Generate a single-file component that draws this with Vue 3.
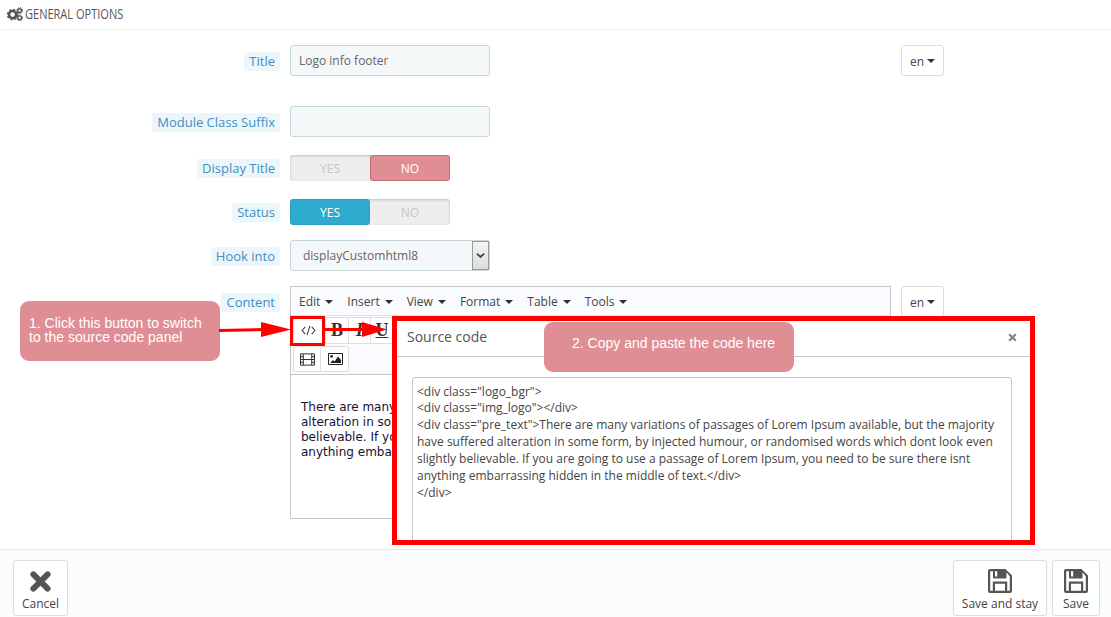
<script setup>
const menus = ['Edit', 'Insert', 'View', 'Format', 'Table', 'Tools']
const sourceLines = [
  '<div class="logo_bgr">',
  '<div class="img_logo"></div>',
  '<div class="pre_text">There are many variations of passages of Lorem Ipsum available, but the majority',
  'have suffered alteration in some form, by injected humour, or randomised words which dont look even',
  'slightly believable. If you are going to use a passage of Lorem Ipsum, you need to be sure there isnt',
  'anything embarrassing hidden in the middle of text.</div>',
  '</div>'
]
const editorLines = ['There are many', 'alteration in som', 'believable. If yo', 'anything embar']
</script>

<template>
  <div class="page">
    <header class="head">
      <svg class="cogs" viewBox="0 0 16 14" width="16" height="14">
        <circle cx="5.6" cy="7.6" r="3.6" fill="none" stroke="#555" stroke-width="2.6" />
        <circle cx="5.6" cy="7.6" r="5" fill="none" stroke="#555" stroke-width="1.6" stroke-dasharray="2 1.93" />
        <circle cx="12.6" cy="3.6" r="1.9" fill="none" stroke="#555" stroke-width="1.4" />
        <circle cx="12.6" cy="3.6" r="2.9" fill="none" stroke="#555" stroke-width="1" stroke-dasharray="1.2 1.08" />
        <circle cx="12.6" cy="10.8" r="1.9" fill="none" stroke="#555" stroke-width="1.4" />
        <circle cx="12.6" cy="10.8" r="2.9" fill="none" stroke="#555" stroke-width="1" stroke-dasharray="1.2 1.08" />
      </svg>
      <span class="head-text">GENERAL OPTIONS</span>
    </header>

    <main class="form">
      <div class="row r-title">
        <div class="lab"><span>Title</span></div>
        <div class="input">Logo info footer</div>
        <button class="lang">en<i class="caret"></i></button>
      </div>
      <div class="row r-suffix">
        <div class="lab"><span>Module Class Suffix</span></div>
        <div class="input"></div>
      </div>
      <div class="row r-toggle">
        <div class="lab"><span>Display Title</span></div>
        <div class="toggle">
          <span class="tg off">YES</span>
          <span class="tg no">NO</span>
        </div>
      </div>
      <div class="row r-toggle r-status">
        <div class="lab"><span>Status</span></div>
        <div class="toggle">
          <span class="tg yes">YES</span>
          <span class="tg off">NO</span>
        </div>
      </div>
      <div class="row r-select">
        <div class="lab"><span>Hook into</span></div>
        <div class="input select">
          <span>displayCustomhtml8</span>
          <span class="sel-btn">
            <svg viewBox="0 0 10 7" width="9" height="7"><path d="M1 1.5l4 3.6 4-3.6" fill="none" stroke="#444" stroke-width="2" /></svg>
          </span>
        </div>
      </div>
      <div class="row r-editor">
        <div class="lab lab-editor"><span>Content</span></div>
        <div class="editor">
          <div class="menubar">
            <span v-for="m in menus" :key="m" class="menu">{{ m }}<i class="caret small"></i></span>
          </div>
          <div class="tools">
            <div class="tool-row first">
              <span class="tb code">
                <svg viewBox="0 0 16 12" width="15" height="11"><path d="M4.5 2L1 6l3.5 4M11.5 2L15 6l-3.5 4M9.5 1L6.5 11" fill="none" stroke="#333" stroke-width="1.1" /></svg>
              </span>
              <span class="tb serif b">B</span>
              <span class="tb serif i">I</span>
              <span class="tb serif u">U</span>
            </div>
            <div class="tool-row second">
              <span class="tb media">
                <svg viewBox="0 0 16 13" width="15" height="13">
                  <path d="M.5.5h15v12H.5zM3.5.5v12M12.5.5v12M3.5 6.5h9M.5 3.5h3M.5 6.5h3M.5 9.5h3M12.5 3.5h3M12.5 6.5h3M12.5 9.5h3" fill="none" stroke="#222" stroke-width="1" />
                </svg>
              </span>
              <span class="tb media">
                <svg viewBox="0 0 15 12" width="15" height="12">
                  <path d="M.5.5h14v11H.5z" fill="none" stroke="#222" />
                  <circle cx="3.6" cy="3.4" r="1.4" fill="#222" />
                  <path d="M2 10l3-3 1.6 1.4L10 3.5l3 3.5v3z" fill="#222" />
                </svg>
              </span>
            </div>
          </div>
          <div class="content">
            <div v-for="l in editorLines" :key="l">{{ l }}</div>
          </div>
        </div>
        <button class="lang">en<i class="caret"></i></button>
      </div>
    </main>

    <footer class="foot">
      <button class="fbtn cancel">
        <svg viewBox="0 0 20 20" width="21" height="21"><path d="M3.2 3.2L16.8 16.8M16.8 3.2L3.2 16.8" stroke="#555" stroke-width="5.6" stroke-linecap="round" /></svg>
        <span>Cancel</span>
      </button>
      <div class="foot-right">
        <button class="fbtn stay">
          <svg viewBox="0 0 24 24" width="24" height="24"><path fill-rule="evenodd" fill="#555" d="M0 2a2 2 0 0 1 2-2h15.5L24 6.500V22a2 2 0 0 1-2 2H2a2 2 0 0 1-2-2zM2.200 2.200v19.600h2.600V12.500h14.400v9.300h2.600V7.400L18.500 3.300v5.200a1 1 0 0 1-1 1H6a1 1 0 0 1-1-1V2.200zM7 2.200V7.500h2.200V2.200zM7 14.700v7.100h10v-7.100z" /></svg>
          <span>Save and stay</span>
        </button>
        <button class="fbtn save">
          <svg viewBox="0 0 24 24" width="24" height="24"><path fill-rule="evenodd" fill="#555" d="M0 2a2 2 0 0 1 2-2h15.5L24 6.500V22a2 2 0 0 1-2 2H2a2 2 0 0 1-2-2zM2.200 2.200v19.600h2.600V12.500h14.400v9.300h2.600V7.400L18.500 3.300v5.200a1 1 0 0 1-1 1H6a1 1 0 0 1-1-1V2.200zM7 2.200V7.500h2.200V2.200zM7 14.700v7.100h10v-7.100z" /></svg>
          <span>Save</span>
        </button>
      </div>
    </footer>

    <section class="modal">
      <div class="modal-head">
        <span class="modal-title">Source code</span>
        <svg viewBox="0 0 10 10" width="9" height="9"><path d="M1.300 1.300l7.400 7.400M8.700 1.300L1.300 8.700" stroke="#808080" stroke-width="2.300" /></svg>
      </div>
      <div class="modal-body">
        <div class="code-box">
          <div v-for="(l, i) in sourceLines" :key="i">{{ l }}</div>
        </div>
      </div>
    </section>

    <div class="note note-one">1. Click this button to switch<br />to the source code panel</div>
    <div class="note note-two">2. Copy and paste the code here</div>

    <div class="code-mark"></div>
    <svg class="arrows" viewBox="0 0 1111 617" width="1111" height="617">
      <path d="M219 330.500L264 329.500" stroke="#f00" stroke-width="3" />
      <path d="M261 322L291 329.500L261 337z" fill="#f00" />
      <path d="M323 329.500H364" stroke="#f00" stroke-width="3" />
      <path d="M362 322L387 329.500L362 337z" fill="#f00" />
    </svg>
  </div>
</template>

<style>
html, body { margin: 0; background: #fff; }
</style>

<style scoped>
.page {
  position: relative;
  width: 1111px;
  height: 617px;
  overflow: hidden;
  display: flex;
  flex-direction: column;
  background: #fff;
  font-family: "Open Sans", sans-serif;
  font-size: 13px;
  color: #555;
}
.head {
  box-sizing: border-box;
  height: 30px;
  margin-left: 2px;
  padding: 6px 0 0 5px;
  display: flex;
  align-items: flex-start;
  gap: 2px;
  border-bottom: 1px solid #eee;
  flex: none;
}
.cogs { margin-top: 1px; }
.head-text {
  display: inline-block;
  font-size: 15px;
  line-height: 15px;
  color: #555;
  transform: scaleX(.735);
  transform-origin: 0 50%;
  white-space: nowrap;
}
.form {
  flex: 1;
  padding-top: 15px;
  display: flex;
  flex-direction: column;
}
.row {
  display: grid;
  grid-template-columns: 280px 601px 43px;
  column-gap: 10px;
  align-items: center;
}
.r-title { height: 31px; margin-bottom: 30px; }
.r-suffix { height: 31px; margin-bottom: 18px; }
.r-toggle { height: 26px; margin-bottom: 18px; }
.r-status { margin-bottom: 15px; }
.r-select { height: 31px; margin-bottom: 15px; }
.r-editor { align-items: start; }
.lab { text-align: right; }
.r-title .lab, .r-suffix .lab, .r-select .lab { padding-top: 2px; }
.lab span {
  display: inline-block;
  height: 19px;
  line-height: 19px;
  padding: 0 5px;
  background: #edf6fb;
  border-radius: 3px;
  color: #3f8fc0;
  font-size: 13px;
}
.lab-editor { padding-top: 7px; }
.input {
  box-sizing: border-box;
  width: 200px;
  height: 31px;
  line-height: 30px;
  padding: 0 8px;
  background: #f5f8f9;
  border: 1px solid #c7d6db;
  border-radius: 3px;
  font-size: 12px;
  color: #666;
}
.select {
  display: flex;
  justify-content: space-between;
  padding: 0 0 0 12px;
}
.sel-btn {
  width: 17px;
  height: 29px;
  box-sizing: border-box;
  border: 1px solid #999;
  background: linear-gradient(#f4f4f4, #ddd);
  display: flex;
  align-items: center;
  justify-content: center;
}
.toggle {
  display: flex;
  width: 160px;
  height: 26px;
  border-radius: 3px;
  background: #eee;
  box-shadow: inset 0 1px 3px rgba(0, 0, 0, .2);
}
.tg {
  box-sizing: border-box;
  width: 80px;
  line-height: 27px;
  text-align: center;
  font-size: 12px;
  border-radius: 3px;
}
.tg.off { color: #c7c7c7; }
.tg.no { background: #e08e95; border: 1px solid #c96c74; line-height: 25px; color: #fff; }
.tg.yes { background: #2eacce; border: 1px solid #28a0c2; line-height: 25px; color: #fff; }
.lang {
  box-sizing: border-box;
  width: 43px;
  height: 31px;
  padding: 1px 0 0;
  border: 1px solid #ddd;
  border-radius: 3px;
  background: #fff;
  font-family: "Open Sans", sans-serif;
  font-size: 12px;
  color: #444;
  display: flex;
  align-items: center;
  justify-content: center;
  gap: 3px;
}
.caret {
  display: inline-block;
  width: 0;
  height: 0;
  border-left: 4px solid transparent;
  border-right: 4px solid transparent;
  border-top: 4px solid #333;
}
.caret.small { margin-left: 5px; margin-bottom: 2px; }
.editor {
  box-sizing: border-box;
  width: 601px;
  height: 233px;
  border: 1px solid #c8c8c8;
  background: #fff;
}
.menubar {
  height: 28px;
  background: #fafbfe;
  display: flex;
  align-items: center;
  padding-left: 8px;
  gap: 14px;
  font-size: 12px;
  color: #444;
}
.menu { white-space: nowrap; }
.tools {
  height: 60px;
  background: #fafbfe;
  border-top: 1px solid #e2e2e2;
  border-bottom: 1px solid #c8c8c8;
  box-sizing: border-box;
}
.tool-row { display: flex; }
.tool-row.first { height: 30px; align-items: flex-start; padding: 1px 0 0 2px; box-sizing: border-box; }
.tool-row.second { height: 26px; padding-left: 2px; }
.tb {
  box-sizing: border-box;
  width: 28px;
  height: 27px;
  display: flex;
  align-items: center;
  justify-content: center;
  background: #fff;
  border: 1px solid #ddd;
  border-left: 0;
}
.tb:first-child { border-left: 1px solid #ddd; border-radius: 3px 0 0 3px; }
.tb:last-child { border-radius: 0 3px 3px 0; }
.tb.media { height: 26px; }
.tb.media svg { margin-left: 1px; }
.tb.code { width: 33px; }
.tb.code svg { margin-right: 3px; }
.tb.serif { font-family: "Liberation Serif", serif; font-size: 18px; font-weight: 700; color: #333; width: 21px; }
.tb.b { width: 23px; }
.tb.i { font-style: italic; width: 22px; }
.tb.u { text-decoration: underline; width: 23px; }
.content {
  padding: 25px 0 0 10px;
  font-family: "DejaVu Sans", sans-serif;
  font-size: 12px;
  line-height: 15px;
  color: #1a1033;
  white-space: nowrap;
}
.foot {
  box-sizing: border-box;
  height: 68px;
  flex: none;
  background: #fafbfd;
  border-top: 1px solid #e8e8e8;
  padding: 10px 11px 0 13px;
  display: flex;
  justify-content: space-between;
  align-items: flex-start;
}
.foot-right { display: flex; gap: 5px; }
.fbtn {
  box-sizing: border-box;
  height: 56px;
  padding: 0;
  background: #fff;
  border: 1px solid #ddd;
  border-radius: 3px;
  font-family: "Open Sans", sans-serif;
  font-size: 12px;
  color: #444;
  display: flex;
  flex-direction: column;
  align-items: center;
  justify-content: flex-start;
  gap: 3px;
}
.fbtn span { line-height: 16px; white-space: nowrap; }
.fbtn svg { margin-top: 8px; }
.cancel { width: 55px; }
.cancel svg { margin-top: 10px; margin-bottom: 1px; }
.stay { width: 94px; }
.save { width: 48px; }
.modal {
  position: absolute;
  left: 392px;
  top: 316px;
  box-sizing: border-box;
  width: 643px;
  height: 229px;
  border: 5px solid #f00;
  background: #fff;
  display: flex;
  flex-direction: column;
}
.modal-head {
  flex: none;
  box-sizing: border-box;
  height: 36px;
  padding: 0 13px 2px 10px;
  border-bottom: 1px solid #c8c8c8;
  display: flex;
  align-items: center;
  justify-content: space-between;
  font-size: 14px;
  color: #555;
}
.modal-title { margin-top: -2px; }
.modal-body { padding: 20px 0 0 15px; flex: 1; overflow: hidden; }
.code-box {
  box-sizing: border-box;
  width: 600px;
  height: 180px;
  padding: 5.500px 0 0 4px;
  border: 1px solid #c8c8c8;
  border-radius: 3px 3px 0 0;
  font-size: 12px;
  line-height: 16.900px;
  color: #444;
  white-space: nowrap;
}
.note {
  position: absolute;
  box-sizing: border-box;
  background: #e08e95;
  color: #fff;
  border-radius: 9px;
  font-family: "Liberation Sans", sans-serif;
  font-size: 14px;
}
.note-one {
  left: 20px;
  top: 301px;
  width: 200px;
  height: 60px;
  padding: 15px 0 0 9px;
  line-height: 14px;
}
.note-two {
  left: 544px;
  top: 322px;
  width: 250px;
  height: 50px;
  padding-left: 28px;
  line-height: 42px;
}
.code-mark {
  position: absolute;
  left: 290px;
  top: 316px;
  box-sizing: border-box;
  width: 35px;
  height: 30px;
  border: 3px solid #f00;
}
.arrows { position: absolute; left: 0; top: 0; pointer-events: none; }
</style>
